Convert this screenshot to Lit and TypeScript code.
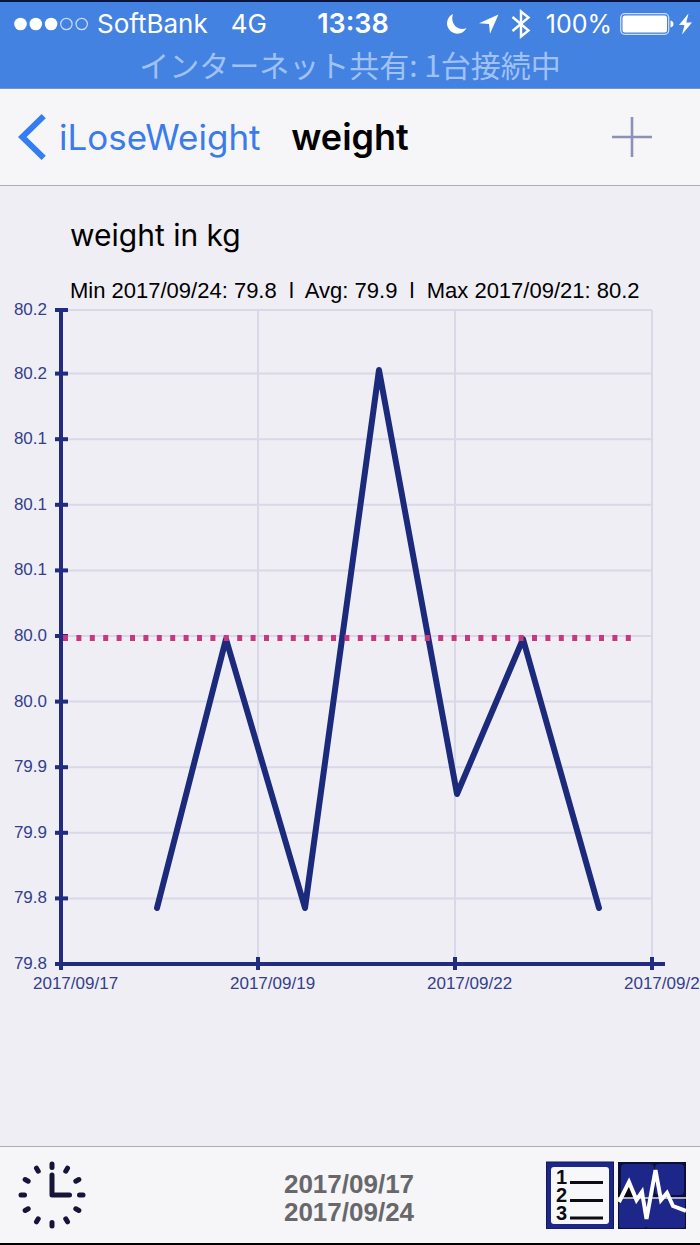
import { LitElement, html, svg, css } from "lit";
import { customElement } from "lit/decorators.js";

@customElement("status-bar")
class StatusBar extends LitElement {
  static styles = css`
    :host {
      display: block;
      background: #4482e1;
      border-top: 2px solid #0b1440;
      border-bottom: 1px solid #6f97cf;
      box-sizing: border-box;
      color: #fff;
      font: 400 26px/44px Inter, "Open Sans", sans-serif;
    }
    .row {
      display: grid;
      grid-template-columns: 1fr auto 1fr;
      align-items: center;
      padding: 0 8px 0 14px;
    }
    .side {
      display: flex;
      align-items: center;
      white-space: nowrap;
    }
    .end {
      justify-content: flex-end;
      font-size: 25px;
    }
    .carrier {
      margin: 0 23px 0 8px;
    }
    .time {
      font-size: 27px;
      font-weight: 600;
    }
    .moon,
    .arrow {
      margin-right: 12px;
    }
    .bt {
      margin-right: 15px;
    }
    .battery {
      margin: 0 5px 0 8px;
    }
    .sharing {
      padding-bottom: 6px;
      text-align: center;
      color: #9fc1f5;
      font: 400 30px/36px "Noto Sans CJK JP", sans-serif;
    }
    svg {
      display: block;
      flex: none;
    }
  `;

  render() {
    return html`
      <div class="row">
        <div class="side">
          <svg width="75" height="14" viewBox="0 0 75 14" fill="#fff">
            ${[0, 1, 2, 3, 4].map((i) =>
              i < 3
                ? svg`<circle cx=${6.5 + i * 15.3} cy="7" r="6.3" />`
                : svg`<circle cx=${6.5 + i * 15.3} cy="7" r="5.7" fill="none" stroke="#c9dcf8" stroke-width="1.2" />`
            )}
          </svg>
          <span class="carrier">SoftBank</span>
          <span>4G</span>
        </div>
        <span class="time">13:38</span>
        <div class="side end">
          <svg class="moon" width="22" height="22" viewBox="0 0 22 22" fill="#fff">
            <path d="M8 1A10.3 10.3 0 1 0 21.500 15C14 18.500 4.500 11.500 8 1Z" />
          </svg>
          <svg class="arrow" width="20" height="20" viewBox="0 0 20 20" fill="#fff">
            <path d="M19.500 .5L0 9.300L10 10L11 19.800Z" />
          </svg>
          <svg class="bt" width="20" height="30" viewBox="0 0 20 30" fill="none" stroke="#fff" stroke-width="2.400">
            <path d="M1.500 8L17.500 21.500L10 27.500V2.500L17.500 8.500L1.500 22" />
          </svg>
          <span>100%</span>
          <svg class="battery" width="54" height="22" viewBox="0 0 54 22">
            <rect x=".7" y=".7" width="48" height="20.600" rx="4" fill="none" stroke="#c9dcf8" stroke-width="1.300" />
            <rect x="2.500" y="2.500" width="44.500" height="17" rx="2.500" fill="#fff" />
            <path d="M50.500 7.500C54.500 8 54.500 14 50.500 14.500Z" fill="#fff" />
          </svg>
          <svg width="13" height="22" viewBox="0 0 13 22" fill="#fff">
            <path d="M9.500 .5L0 12H5.500L3 21.500L13 9.500H7.300Z" />
          </svg>
        </div>
      </div>
      <div class="sharing">インターネット共有: 1台接続中</div>
    `;
  }
}

@customElement("nav-bar")
class NavBar extends LitElement {
  static styles = css`
    :host {
      display: grid;
      grid-template-columns: 1fr auto 1fr;
      align-items: center;
      height: 96px;
      padding: 0 18px;
      background: #f6f6f9;
      border-bottom: 1px solid #adadb2;
      font: 400 35px/48px Inter, "Open Sans", sans-serif;
    }
    .back {
      display: flex;
      align-items: center;
      gap: 13px;
      color: #3c7bea;
      text-decoration: none;
      white-space: nowrap;
    }
    h1 {
      margin: 0;
      font-size: 36px;
      line-height: 48px;
      font-weight: 600;
      color: #000;
    }
    .add {
      justify-self: end;
      margin-right: 29px;
      padding: 0;
      border: 0;
      background: none;
    }
    svg {
      display: block;
      flex: none;
    }
  `;

  render() {
    return html`
      <a class="back" href="#">
        <svg width="28" height="46" viewBox="0 0 28 46" fill="none" stroke="#357df2" stroke-width="6">
          <path d="M25.700 2.200L4.200 23L25.700 43.800" />
        </svg>
        iLoseWeight
      </a>
      <h1>weight</h1>
      <button class="add" aria-label="Add">
        <svg width="42" height="42" viewBox="0 0 42 42" stroke="#8b91b9" stroke-width="2.600">
          <path d="M21 1V41M1 21H41" />
        </svg>
      </button>
    `;
  }
}

const LEFT = 61;
const RIGHT = 652;
const TOP = 6;
const BOTTOM = 660;
const AVERAGE = 334;
const yLabels = ["79.8", "79.8", "79.9", "79.9", "80.0", "80.0", "80.1", "80.1", "80.1", "80.2", "80.2"];
const yTicks = yLabels.map((label, i) => ({ label, y: Math.max(TOP, BOTTOM - i * 65.6) }));
const xTicks = ["2017/09/17", "2017/09/19", "2017/09/22", "2017/09/24"].map((label, i) => ({
  label,
  x: LEFT + i * 197,
}));
const points = [
  [157, 604],
  [226, 335],
  [305, 604],
  [379, 66],
  [457, 490],
  [523, 335],
  [599, 604],
];

@customElement("weight-chart")
class WeightChart extends LitElement {
  static styles = css`
    :host {
      display: block;
    }
    svg {
      display: block;
      width: 100%;
      overflow: visible;
    }
    .grid {
      stroke: #d9d8e6;
      stroke-width: 2;
    }
    .axis {
      stroke: #202c80;
      stroke-width: 4;
    }
    .label {
      fill: #343f8b;
      font: 400 17px "Liberation Sans", Arial, sans-serif;
    }
    .series {
      fill: none;
      stroke: #1b2a7b;
      stroke-width: 6;
      stroke-linecap: round;
      stroke-linejoin: round;
    }
    .average {
      stroke: #c8377f;
      stroke-width: 6;
      stroke-dasharray: 5 8.4;
    }
  `;

  render() {
    return html`
      <svg viewBox="0 0 700 700" role="img" aria-label="weight in kg">
        <g class="grid">
          ${yTicks.map((t) => svg`<line x1=${LEFT} x2=${RIGHT} y1=${t.y} y2=${t.y} />`)}
          ${xTicks.slice(1).map((t) => svg`<line x1=${t.x} x2=${t.x} y1=${TOP} y2=${BOTTOM} />`)}
        </g>
        <g class="axis">
          <line x1=${LEFT} x2=${LEFT} y1=${TOP} y2=${BOTTOM} />
          <line x1=${LEFT} x2="665" y1=${BOTTOM} y2=${BOTTOM} />
          ${yTicks.map((t) => svg`<line x1="55" x2="68" y1=${t.y} y2=${t.y} />`)}
          ${xTicks.map((t) => svg`<line x1=${t.x} x2=${t.x} y1="653" y2="666" />`)}
        </g>
        <polyline class="series" points=${points.map((p) => p.join(",")).join(" ")} />
        <line class="average" x1="63" x2="632" y1=${AVERAGE} y2=${AVERAGE} />
        <g class="label" text-anchor="end">
          ${yTicks.map((t) => svg`<text x="47" y=${t.y + 5}>${t.label}</text>`)}
        </g>
        <g class="label">
          ${xTicks.map((t) => svg`<text x=${t.x - 28} y="685">${t.label}</text>`)}
        </g>
      </svg>
    `;
  }
}

@customElement("tool-bar")
class ToolBar extends LitElement {
  static styles = css`
    :host {
      display: grid;
      grid-template-columns: 1fr auto 1fr;
      align-items: center;
      height: 96px;
      padding: 0 14px 0 12px;
      background: #f6f6f9;
      border-top: 1px solid #adadb2;
      border-bottom: 2px solid #000;
    }
    button {
      padding: 0;
      border: 0;
      background: none;
    }
    .clock {
      justify-self: start;
      margin-left: 6px;
    }
    .range {
      padding-top: 6px;
      color: #68686a;
      font: 700 26px/28px "Liberation Sans", Arial, sans-serif;
      text-align: center;
    }
    .modes {
      display: flex;
      justify-self: end;
      gap: 4px;
    }
    svg {
      display: block;
    }
    .digit {
      font: 700 20px "Liberation Sans", Arial, sans-serif;
      fill: #0c0c14;
    }
  `;

  render() {
    return html`
      <button class="clock" aria-label="Time range">
        <svg width="68" height="68" viewBox="0 0 68 68" fill="none" stroke="#17143a" stroke-width="5" stroke-linecap="round">
          ${Array.from(
            { length: 12 },
            (_, i) => svg`<path d="M34 3V6.500" transform="rotate(${i * 30} 34 34)" />`
          )}
          <path d="M34 14V34H51.500" stroke-linejoin="round" />
        </svg>
      </button>
      <div class="range">
        <div>2017/09/17</div>
        <div>2017/09/24</div>
      </div>
      <div class="modes">
        <button aria-label="List">
          <svg width="68" height="68" viewBox="0 0 68 68">
            <rect x=".5" y="1" width="67" height="67" fill="#1c2789" stroke="#141a50" />
            <rect x="5" y="6" width="58" height="57" rx="3" fill="#f8f8fb" />
            <g class="digit">
              <text x="10" y="23">1</text>
              <text x="10" y="41">2</text>
              <text x="10" y="59">3</text>
            </g>
            <path d="M24 21.500H57M24 39.500H57M24 57H57" stroke="#0c0c14" stroke-width="3" />
          </svg>
        </button>
        <button aria-label="Chart">
          <svg width="68" height="68" viewBox="0 0 68 68">
            <rect y="1" width="68" height="67" fill="#0b0f38" />
            <rect x="3" y="3" width="33" height="33" rx="4" fill="#1c2789" />
            <rect x="37" y="3" width="29" height="31" rx="4" fill="#1c2789" />
            <rect x="1" y="38" width="27" height="29" rx="2" fill="#1c2789" />
            <rect x="28" y="38" width="39" height="29" rx="2" fill="#1c2789" />
            <path d="M0 25L0 37H28L24 31L18 38L11 22L3 36Z" fill="#05060f" />
            <path d="M0 37H68" stroke="#dfe0ec" stroke-width="1.600" />
            <path
              d="M1 41L11 21L18.500 39L24 31L28.500 58L37.500 9L43 39L49 32L55 45L68 50"
              fill="none"
              stroke="#fff"
              stroke-width="4"
            />
          </svg>
        </button>
      </div>
    `;
  }
}

@customElement("app-root")
class AppRoot extends LitElement {
  static styles = css`
    :host {
      display: flex;
      flex-direction: column;
      min-height: 100vh;
      background: #efeef5;
      color: #000;
    }
    main {
      flex: 1;
      overflow: hidden;
    }
    h2 {
      margin: 30px 70px 0;
      font: 400 30px/38px Inter, "Open Sans", sans-serif;
    }
    .summary {
      margin: 24px 0 0 70px;
      font: 400 22px/26px "Liberation Sans", Arial, sans-serif;
      white-space: pre;
    }
  `;

  render() {
    return html`
      <status-bar></status-bar>
      <nav-bar></nav-bar>
      <main>
        <h2>weight in kg</h2>
        <div class="summary">${"Min 2017/09/24: 79.8  l  Avg: 79.9  l  Max 2017/09/21: 80.2"}</div>
        <weight-chart></weight-chart>
      </main>
      <tool-bar></tool-bar>
    `;
  }
}
